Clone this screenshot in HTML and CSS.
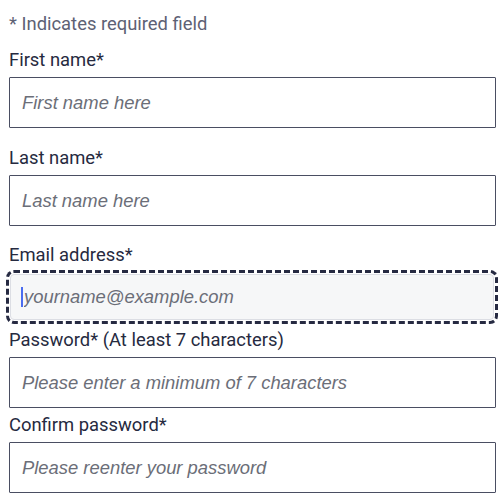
FILE: index.html
```html
<!DOCTYPE html>
<html>
<head>
<meta charset="utf-8">
<link rel="stylesheet" href="styles.css">
</head>
<body>
<form class="form">
  <p class="note">* Indicates required field</p>
  <label class="label" for="fn">First name*</label>
  <input class="field field-gap" id="fn" type="text" placeholder="First name here">
  <label class="label" for="ln">Last name*</label>
  <input class="field field-gap-sm" id="ln" type="text" placeholder="Last name here">
  <label class="label" for="em">Email address*</label>
  <div class="focus-wrap">
    <input class="field field-focus" id="em" type="email" placeholder="yourname@example.com">
    <span class="caret"></span>
  </div>
  <label class="label" for="pw">Password* (At least 7 characters)</label>
  <input class="field field-tight" id="pw" type="password" placeholder="Please enter a minimum of 7 characters">
  <label class="label" for="cpw">Confirm password*</label>
  <input class="field" id="cpw" type="password" placeholder="Please reenter your password">
</form>
</body>
</html>
```

FILE: styles.css
```css
* { box-sizing: border-box; }
html, body { margin: 0; padding: 0; background: #ffffff; }
body { font-family: Roboto, "Liberation Sans", sans-serif; }
.form {
  display: flex;
  flex-direction: column;
  padding: 13px 4px 0 9px;
}
.note {
  margin: 0 0 14px 0;
  font-size: 18.4px;
  line-height: 22px;
  color: #5d6174;
}
.label {
  display: block;
  font-size: 18.4px;
  line-height: 22px;
  color: #262a40;
  margin-bottom: 6px;
}
.field {
  display: block;
  width: 487px;
  height: 51px;
  margin: 0;
  padding: 0 12px;
  border: 1px solid #4a4e62;
  border-radius: 1px;
  background: #ffffff;
  font-family: "Liberation Sans", Arial, sans-serif;
  font-size: 18.4px;
  color: #262a40;
  outline: none;
}
.field::placeholder {
  font-style: italic;
  color: #6b6e78;
}
.field-gap { margin-bottom: 19px; }
.field-gap-sm { margin-bottom: 18px; }
.field-tight { margin-bottom: 6px; }
.label[for="em"] { margin-bottom: 8px; }
.focus-wrap {
  position: relative;
  width: 484px;
  margin-left: 1px;
  margin-bottom: 9px;
}
.field-focus {
  width: 484px;
  height: 46px;
  padding-left: 13px;
  background: #f6f7f8;
  border: 1px solid #dcdee4;
  border-radius: 4px;
  outline: 3px dashed #262a42;
  outline-offset: 1px;
}
.caret {
  position: absolute;
  left: 11px;
  top: 13px;
  width: 2px;
  height: 20px;
  background: #4a6cf0;
}
```
